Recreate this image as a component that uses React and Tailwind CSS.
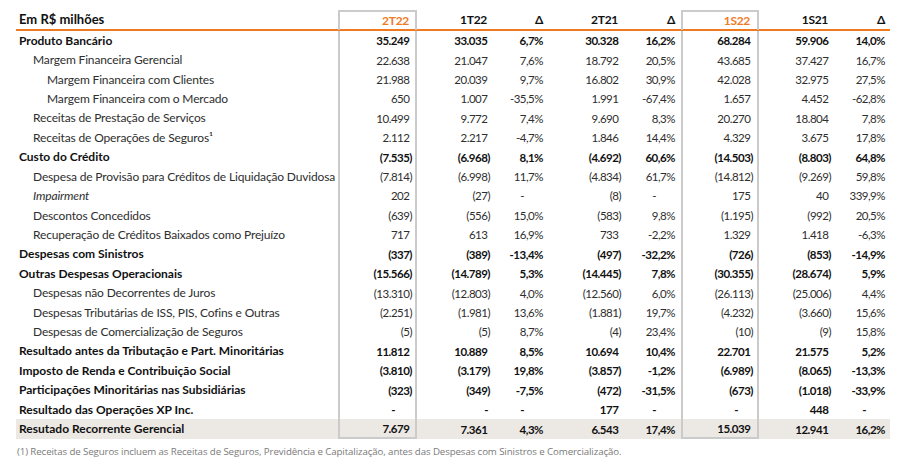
import React from "react";

const rows = [
  ["Produto Bancário", 0, ["35.249", "33.035", "6,7%", "30.328", "16,2%", "68.284", "59.906", "14,0%"]],
  ["Margem Financeira Gerencial", 1, ["22.638", "21.047", "7,6%", "18.792", "20,5%", "43.685", "37.427", "16,7%"]],
  ["Margem Financeira com Clientes", 2, ["21.988", "20.039", "9,7%", "16.802", "30,9%", "42.028", "32.975", "27,5%"]],
  ["Margem Financeira com o Mercado", 2, ["650", "1.007", "-35,5%", "1.991", "-67,4%", "1.657", "4.452", "-62,8%"]],
  ["Receitas de Prestação de Serviços", 1, ["10.499", "9.772", "7,4%", "9.690", "8,3%", "20.270", "18.804", "7,8%"]],
  ["Receitas de Operações de Seguros¹", 1, ["2.112", "2.217", "-4,7%", "1.846", "14,4%", "4.329", "3.675", "17,8%"]],
  ["Custo do Crédito", 0, ["(7.535)", "(6.968)", "8,1%", "(4.692)", "60,6%", "(14.503)", "(8.803)", "64,8%"]],
  ["Despesa de Provisão para Créditos de Liquidação Duvidosa", 1, ["(7.814)", "(6.998)", "11,7%", "(4.834)", "61,7%", "(14.812)", "(9.269)", "59,8%"]],
  ["Impairment", 3, ["202", "(27)", "-", "(8)", "-", "175", "40", "339,9%"]],
  ["Descontos Concedidos", 1, ["(639)", "(556)", "15,0%", "(583)", "9,8%", "(1.195)", "(992)", "20,5%"]],
  ["Recuperação de Créditos Baixados como Prejuízo", 1, ["717", "613", "16,9%", "733", "-2,2%", "1.329", "1.418", "-6,3%"]],
  ["Despesas com Sinistros", 0, ["(337)", "(389)", "-13,4%", "(497)", "-32,2%", "(726)", "(853)", "-14,9%"]],
  ["Outras Despesas Operacionais", 0, ["(15.566)", "(14.789)", "5,3%", "(14.445)", "7,8%", "(30.355)", "(28.674)", "5,9%"]],
  ["Despesas não Decorrentes de Juros", 1, ["(13.310)", "(12.803)", "4,0%", "(12.560)", "6,0%", "(26.113)", "(25.006)", "4,4%"]],
  ["Despesas Tributárias de ISS, PIS, Cofins e Outras", 1, ["(2.251)", "(1.981)", "13,6%", "(1.881)", "19,7%", "(4.232)", "(3.660)", "15,6%"]],
  ["Despesas de Comercialização de Seguros", 1, ["(5)", "(5)", "8,7%", "(4)", "23,4%", "(10)", "(9)", "15,8%"]],
  ["Resultado antes da Tributação e Part. Minoritárias", 0, ["11.812", "10.889", "8,5%", "10.694", "10,4%", "22.701", "21.575", "5,2%"]],
  ["Imposto de Renda e Contribuição Social", 0, ["(3.810)", "(3.179)", "19,8%", "(3.857)", "-1,2%", "(6.989)", "(8.065)", "-13,3%"]],
  ["Participações Minoritárias nas Subsidiárias", 0, ["(323)", "(349)", "-7,5%", "(472)", "-31,5%", "(673)", "(1.018)", "-33,9%"]],
  ["Resultado das Operações XP Inc.", 0, ["-", "-", "-", "177", "-", "-", "448", "-"]],
  ["Resutado Recorrente Gerencial", 0, ["7.679", "7.361", "4,3%", "6.543", "17,4%", "15.039", "12.941", "16,2%"]],
];

// per column: cell classes, is percent column, dash margin
const cols = [
  { cls: "pr-[3px] border-x-2 border-[#cbcbcb]", pct: false, dash: "mr-[17px]" },
  { cls: "pr-[5px]", pct: false, dash: "mr-[2px]" },
  { cls: "pr-[5px]", pct: true, dash: "mr-[19px]" },
  { cls: "pr-[5px]", pct: false, dash: "mr-[2px]" },
  { cls: "pr-[6px]", pct: true, dash: "mr-[19px]" },
  { cls: "pr-[4px] border-x-2 border-[#cbcbcb]", pct: false, dash: "mr-[15px]" },
  { cls: "pr-[5px]", pct: false, dash: "mr-[2px]" },
  { cls: "pr-[5px]", pct: true, dash: "mr-[19px]" },
];

const grid =
  "grid w-[874px] grid-cols-[322px_79px_78px_53px_78px_55px_78px_77px_54px]";

const headers = ["2T22", "1T22", "Δ", "2T21", "Δ", "1S22", "1S21", "Δ"];

const Value = ({ v, col }) => {
  if (v === "-") return <span className={col.dash}>-</span>;
  if (!col.pct && !v.startsWith("("))
    return (
      <span>
        {v}
        <span className="invisible">)</span>
      </span>
    );
  return <span>{v}</span>;
};

const App = () => {
  return (
    <div className="w-[908px] h-[468px] bg-white pl-[16px] pt-[10px] font-['Lato',sans-serif] text-[#222]">
      {/* header */}
      <div className={`${grid} h-[21px] border-b-2 border-[#f07a1f]`}>
        <div className="flex items-center pl-[3px] text-[13px] font-bold text-[#111]">
          Em R$ milhões
        </div>
        {headers.map((h, i) => (
          <div
            key={i}
            className={`flex items-center justify-end text-[12px] font-bold tracking-[-0.3px] ${cols[i].cls} ${
              i === 0 || i === 5 ? "border-t-2 text-[#f07a1f]" : "text-[#111]"
            }`}
          >
            {h}
            {!cols[i].pct && <span className="invisible">)</span>}
          </div>
        ))}
      </div>

      {rows.map(([label, level, vals], r) => {
        const bold = level === 0;
        const last = r === rows.length - 1;
        return (
          <div
            key={r}
            className={`${grid} h-[19.43px] ${last ? "bg-[#ece8e4]" : ""} ${
              bold ? "font-bold text-[#111]" : "text-[#2e2e2e]"
            }`}
          >
            <div
              className={`flex items-center whitespace-nowrap ${
                bold
                  ? "pl-[3px] text-[12px]"
                  : level === 2
                  ? "pl-[31px] text-[12px] tracking-[-0.15px]"
                  : "pl-[17px] text-[12px] tracking-[-0.15px]"
              } ${level === 3 ? "italic" : ""}`}
            >
              {label}
            </div>
            {vals.map((v, i) => (
              <div
                key={i}
                className={`flex items-center justify-end whitespace-nowrap tracking-[-0.5px] text-[11.5px] ${
                  cols[i].cls
                } ${last && (i === 0 || i === 5) ? "border-b-2" : ""}`}
              >
                <Value v={v} col={cols[i]} />
              </div>
            ))}
          </div>
        );
      })}

      <p className="mt-[6px] pl-[1px] text-[9.7px] text-[#7a7a7a] font-['Open_Sans',sans-serif] tracking-[-0.1px]">
        (1) Receitas de Seguros incluem as Receitas de Seguros, Previdência e Capitalização, antes das Despesas com Sinistros e Comercialização.
      </p>
    </div>
  );
};

export default App;
